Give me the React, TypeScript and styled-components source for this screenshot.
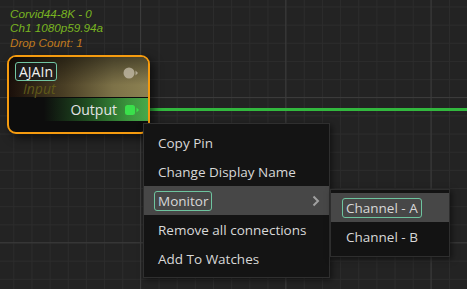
import styled, {createGlobalStyle} from 'styled-components';

const GlobalStyle = createGlobalStyle`
	html, body {
		margin: 0;
		padding: 0;
		background: #232323;
	}
	body {
		font-family: 'Open Sans', 'Noto Sans', sans-serif;
	}
`;

const MINOR = 18.16;
const MAJOR = MINOR * 8;

const Canvas = styled.div`
	position: relative;
	width: 467px;
	height: 289px;
	overflow: hidden;
	background-color: #232323;
	background-image: linear-gradient(#3b3b3b 1px, transparent 1px),
		linear-gradient(90deg, #3b3b3b 1px, transparent 1px),
		linear-gradient(#2c2c2c 1px, transparent 1px),
		linear-gradient(90deg, #2c2c2c 1px, transparent 1px);
	background-size: ${MAJOR}px ${MAJOR}px, ${MAJOR}px ${MAJOR}px,
		${MINOR}px ${MINOR}px, ${MINOR}px ${MINOR}px;
	background-position: 0 97px, 140px 0, 0 6.5px, 13.3px 0;
	padding: 7px 10px;
	box-sizing: border-box;
`;

const InfoLine = styled.div<{$tone: 'green' | 'orange'}>`
	font-family: 'Liberation Sans', Arial, sans-serif;
	font-size: 11.7px;
	font-style: italic;
	line-height: 14.3px;
	color: ${({$tone}) => ($tone === 'green' ? '#79b521' : '#c07a1e')};
`;

const Wire = styled.div`
	position: absolute;
	left: 140px;
	right: 0;
	top: 108px;
	height: 3px;
	background: #32b83e;
`;

const Node = styled.div`
	position: absolute;
	left: 7px;
	top: 55px;
	width: 143px;
	height: 79px;
	box-sizing: border-box;
	border: 2px solid #f59b0f;
	border-radius: 9px;
	background: #0d0d0d;
	overflow: hidden;
	display: flex;
	flex-direction: column;
	box-shadow: 4px 4px 10px rgba(0, 0, 0, 0.6);
`;

const Header = styled.div`
	position: relative;
	height: 40px;
	padding: 3px 0 0 6px;
	box-sizing: border-box;
	background: linear-gradient(rgba(0, 0, 0, 0.45), rgba(0, 0, 0, 0) 70%),
		linear-gradient(90deg, #1a0f0a 0%, #4a3f25 40%, #7d7248 75%, #8c8152 100%);
`;

const NameTag = styled.span`
	display: inline-block;
	padding: 0 3px;
	border: 1px solid #72c6a3;
	border-radius: 3px;
	background: rgba(30, 30, 30, 0.75);
	color: #f0f0f0;
	font-size: 14px;
	line-height: 17px;
`;

const Subtitle = styled.div`
	margin: -1px 0 0 8px;
	font-size: 14px;
	font-style: italic;
	line-height: 15px;
	color: #5f5919;
`;

const HeaderPin = styled.svg`
	position: absolute;
	right: 8px;
	top: 10px;
`;

const OutputRow = styled.div`
	height: 23px;
	margin-top: 1px;
	display: flex;
	align-items: center;
	justify-content: flex-end;
	gap: 8px;
	padding-right: 8px;
	background: linear-gradient(90deg, #0d0d0d 25%, #1f4a20 55%, #3a933c 85%, #48a84a 100%);
	color: #e4e4e4;
	font-size: 14px;
`;

const Menu = styled.div`
	position: absolute;
	left: 143px;
	top: 123px;
	width: 187px;
	box-sizing: border-box;
	padding: 4px 0;
	background: #141414;
	border: 1px solid #2f2f2f;
	box-shadow: 2px 2px 6px rgba(0, 0, 0, 0.5);
`;

const Item = styled.div<{$active?: boolean}>`
	position: relative;
	height: 29px;
	display: flex;
	align-items: center;
	padding-left: 14px;
	background: ${({$active}) => ($active ? '#474747' : 'transparent')};
	color: #d8d8d8;
	font-size: 13.5px;
	white-space: nowrap;
`;

const Tag = styled.span`
	margin-left: -4px;
	padding: 0 3px;
	border: 1px solid #6ec49f;
	border-radius: 3px;
	line-height: 18px;
`;

const Chevron = styled.svg`
	position: absolute;
	right: 9px;
	top: 9px;
`;

const SubMenu = styled.div`
	position: absolute;
	left: 186px;
	top: 65px;
	width: 120px;
	box-sizing: border-box;
	padding: 3px 0 5px;
	background: #131313;
	border: 1px solid #2e2e2e;
	box-shadow: 2px 2px 6px rgba(0, 0, 0, 0.5);
`;

const SubItem = styled(Item)`
	padding-left: 15px;
`;

const App = () => {
	return (
		<>
			<GlobalStyle />
			<Canvas>
				<InfoLine $tone="green">Corvid44-8K - 0</InfoLine>
				<InfoLine $tone="green">Ch1 1080p59.94a</InfoLine>
				<InfoLine $tone="orange">Drop Count: 1</InfoLine>
				<Wire />
				<Node>
					<Header>
						<NameTag>AJAIn</NameTag>
						<Subtitle>Input</Subtitle>
						<HeaderPin width="17" height="12" viewBox="0 0 17 12">
							<circle cx="6" cy="6" r="5.5" fill="#c8c0ae" opacity="0.75" />
							<path d="M12.5 3.5 L15 6 L12.5 8.5 Z" fill="#c8c0ae" opacity="0.75" />
						</HeaderPin>
					</Header>
					<OutputRow>
						<span>Output</span>
						<svg width="15" height="10" viewBox="0 0 15 10">
							<rect x="0" y="0" width="10" height="10" rx="2.5" fill="#3ae04b" />
							<path d="M11.5 2.5 L14 5 L11.5 7.5 Z" fill="#3ae04b" />
						</svg>
					</OutputRow>
				</Node>
				<Menu>
					<Item>Copy Pin</Item>
					<Item>Change Display Name</Item>
					<Item $active>
						<Tag>Monitor</Tag>
						<Chevron width="8" height="12" viewBox="0 0 8 12">
							<path d="M1.5 1.5 L6 6 L1.5 10.5" stroke="#a0a0a0" strokeWidth="2" fill="none" />
						</Chevron>
					</Item>
					<Item>Remove all connections</Item>
					<Item>Add To Watches</Item>
					<SubMenu>
						<SubItem $active>
							<Tag>Channel - A</Tag>
						</SubItem>
						<SubItem>Channel - B</SubItem>
					</SubMenu>
				</Menu>
			</Canvas>
		</>
	);
};

export default App;
